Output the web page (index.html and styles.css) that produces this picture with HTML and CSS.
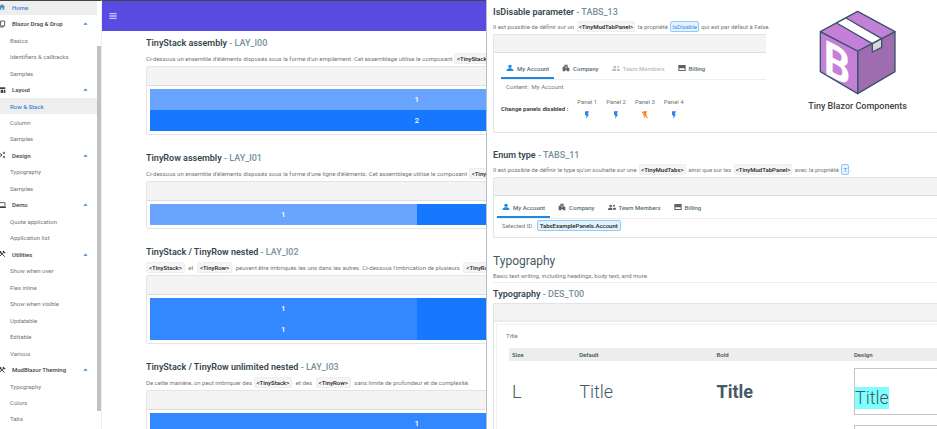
FILE: index.html
```html
<!DOCTYPE html>
<html lang="fr">
<head>
  <meta charset="UTF-8">
  <meta name="viewport" content="width=device-width, initial-scale=1.0">
  <title>Tiny Blazor Components</title>
  <link rel="stylesheet" href="styles.css">
</head>
<body>

  <!-- Icons -->
  <svg class="sprite" aria-hidden="true">
    <symbol id="i-home" viewBox="0 0 24 24"><path d="M10 20v-6h4v6h5v-8h3L12 3 2 12h3v8z"/></symbol>
    <symbol id="i-drag" viewBox="0 0 24 24"><path d="M8 3h12v15H8zM8 7H4v14h12v-3" fill="none" stroke="currentColor" stroke-width="2.5"/></symbol>
    <symbol id="i-layout" viewBox="0 0 24 24"><path d="M2 4h20v5H2zM2 11h5v10H2zM9 11h6v10H9zM17 11h5v10h-5z"/></symbol>
    <symbol id="i-design" viewBox="0 0 24 24"><path d="M3 5l9 7-9 7" fill="none" stroke="currentColor" stroke-width="3"/><path d="M18 1l1.500 3.500L23 6l-3.500 1.500L18 11l-1.500-3.500L13 6l3.500-1.500zM18 13l1.500 3.500L23 18l-3.500 1.500L18 23l-1.500-3.500L13 18l3.500-1.500z"/></symbol>
    <symbol id="i-demo" viewBox="0 0 24 24"><path d="M3 5h18v12H3z" fill="none" stroke="currentColor" stroke-width="2.500"/><path d="M0 18h24v3H0z"/></symbol>
    <symbol id="i-tools" viewBox="0 0 24 24"><path d="M4 20L19 5M7 6l13 14" fill="none" stroke="currentColor" stroke-width="3"/><path d="M2 3h7l2 4-4 4-5-4zM15 2h3v4h4v4h-5l-3-3z"/></symbol>
    <symbol id="i-up" viewBox="0 0 24 24"><path d="M2 18L12 7l10 11z"/></symbol>
    <symbol id="i-menu" viewBox="0 0 24 24"><path d="M1 3h22v4H1zM1 10h22v4H1zM1 17h22v4H1z"/></symbol>
    <symbol id="i-person" viewBox="0 0 24 24"><circle cx="12" cy="7" r="5"/><path d="M2 21v-3c0-3 6-5 10-5s10 2 10 5v3z"/></symbol>
    <symbol id="i-company" viewBox="0 0 24 24"><path fill-rule="evenodd" d="M2 8h5V2h10v9h5v11h-8v-4h-4v4H2zM11 5v9h2V5z"/></symbol>
    <symbol id="i-team" viewBox="0 0 24 24"><circle cx="8" cy="9" r="4"/><circle cx="18" cy="8" r="3"/><path d="M0 21v-3c0-3 5-4 8-4 1 0 3 0 4 1v6zM14 20v-4c2-2 10-3 10 1v3z"/></symbol>
    <symbol id="i-card" viewBox="0 0 24 24"><path fill-rule="evenodd" d="M1 3h22v18H1zM4 13v5h16v-5z"/></symbol>
    <symbol id="i-flash" viewBox="0 0 24 24"><path d="M6 1v12h4v10l8-13h-4l4-9z"/></symbol>
    <symbol id="i-flash-off" viewBox="0 0 24 24"><path d="M7 1h11l-4 9h4l-2 4-9-9zM7 9l7 7-4 7v-9H7z"/><path d="M2 2l19 20" fill="none" stroke="currentColor" stroke-width="3"/></symbol>
  </svg>

  <aside class="sidebar">
    <nav class="menu">
      <a class="menu-home active" href="#"><svg class="icon"><use href="#i-home"/></svg>Home</a>
      <button class="menu-group"><svg class="icon"><use href="#i-drag"/></svg>Blazor Drag &amp; Drop<svg class="caret"><use href="#i-up"/></svg></button>
      <a class="menu-item" href="#">Basics</a>
      <a class="menu-item" href="#">Identifiers &amp; callbacks</a>
      <a class="menu-item" href="#">Samples</a>
      <button class="menu-group"><svg class="icon"><use href="#i-layout"/></svg>Layout<svg class="caret"><use href="#i-up"/></svg></button>
      <a class="menu-item active" href="#">Row &amp; Stack</a>
      <a class="menu-item" href="#">Column</a>
      <a class="menu-item" href="#">Samples</a>
      <button class="menu-group"><svg class="icon"><use href="#i-design"/></svg>Design<svg class="caret"><use href="#i-up"/></svg></button>
      <a class="menu-item" href="#">Typography</a>
      <a class="menu-item" href="#">Samples</a>
      <button class="menu-group"><svg class="icon"><use href="#i-demo"/></svg>Demo<svg class="caret"><use href="#i-up"/></svg></button>
      <a class="menu-item" href="#">Quote application</a>
      <a class="menu-item" href="#">Application list</a>
      <button class="menu-group"><svg class="icon"><use href="#i-tools"/></svg>Utilities<svg class="caret"><use href="#i-up"/></svg></button>
      <a class="menu-item" href="#">Show when over</a>
      <a class="menu-item" href="#">Flex inline</a>
      <a class="menu-item" href="#">Show when visible</a>
      <a class="menu-item" href="#">Updatable</a>
      <a class="menu-item" href="#">Editable</a>
      <a class="menu-item" href="#">Various</a>
      <button class="menu-group"><svg class="icon"><use href="#i-tools"/></svg>MudBlazor Theming<svg class="caret"><use href="#i-up"/></svg></button>
      <a class="menu-item" href="#">Typography</a>
      <a class="menu-item" href="#">Colors</a>
      <a class="menu-item" href="#">Tabs</a>
    </nav>
    <div class="scrollbar"><div class="scroll-thumb"></div></div>
  </aside>

  <main class="layout-pane">
    <header class="app-bar">
      <button class="menu-btn" aria-label="Menu"><svg class="icon"><use href="#i-menu"/></svg></button>
    </header>
    <div class="page">
      <section class="example">
        <h2>TinyStack assembly <span>- LAY_I00</span></h2>
        <p class="desc">Ci-dessous un ensemble d'éléments disposés sous la forme d'un empilement. Cet assemblage utilise le composant <code>&lt;TinyStack&gt;</code></p>
        <div class="card">
          <div class="card-head"></div>
          <div class="demo">
            <div class="cell light">1</div>
            <div class="cell strong">2</div>
          </div>
        </div>
      </section>
      <section class="example">
        <h2>TinyRow assembly <span>- LAY_I01</span></h2>
        <p class="desc">Ci-dessous un ensemble d'éléments disposés sous la forme d'une ligne d'éléments. Cet assemblage utilise le composant <code>&lt;TinyRow&gt;</code></p>
        <div class="card">
          <div class="card-head"></div>
          <div class="demo row">
            <div class="cell light">1</div>
            <div class="cell strong"></div>
          </div>
        </div>
      </section>
      <section class="example">
        <h2>TinyStack / TinyRow nested <span>- LAY_I02</span></h2>
        <p class="desc"><code>&lt;TinyStack&gt;</code> et <code>&lt;TinyRow&gt;</code> peuvent être imbriqués les uns dans les autres. Ci-dessous l'imbrication de plusieurs <code>&lt;TinyRow&gt;</code></p>
        <div class="card">
          <div class="card-head"></div>
          <div class="demo row">
            <div class="stack">
              <div class="cell medium">1</div>
              <div class="cell medium">1</div>
            </div>
            <div class="stack strong"></div>
          </div>
        </div>
      </section>
      <section class="example">
        <h2>TinyStack / TinyRow unlimited nested <span>- LAY_I03</span></h2>
        <p class="desc">De cette manière, on peut imbriquer des <code>&lt;TinyStack&gt;</code> et des <code>&lt;TinyRow&gt;</code> sans limite de profondeur et de complexité.</p>
        <div class="card">
          <div class="card-head"></div>
          <div class="demo">
            <div class="cell medium">1</div>
          </div>
        </div>
      </section>
    </div>
  </main>

  <div class="tabs-pane">
    <section class="block">
      <h2>IsDisable parameter <span>- TABS_13</span></h2>
      <p class="desc">Il est possible de définir sur un <code>&lt;TinyMudTabPanel&gt;</code> la propriété <code class="prop">IsDisable</code> qui est par défaut à False.</p>
      <div class="card">
        <div class="card-head"></div>
        <div class="card-body roomy">
          <div class="tabs">
            <button class="tab selected"><svg class="icon"><use href="#i-person"/></svg>My Account</button>
            <button class="tab"><svg class="icon"><use href="#i-company"/></svg>Company</button>
            <button class="tab" disabled><svg class="icon"><use href="#i-team"/></svg>Team Members</button>
            <button class="tab"><svg class="icon"><use href="#i-card"/></svg>Billing</button>
          </div>
          <p class="tab-content">Content : My Account</p>
          <div class="switches">
            <strong>Change panels disabled :</strong>
            <div class="switch"><span id="p1">Panel 1</span><button aria-labelledby="p1"><svg class="icon"><use href="#i-flash"/></svg></button></div>
            <div class="switch"><span id="p2">Panel 2</span><button aria-labelledby="p2"><svg class="icon"><use href="#i-flash"/></svg></button></div>
            <div class="switch off"><span id="p3">Panel 3</span><button aria-labelledby="p3"><svg class="icon"><use href="#i-flash-off"/></svg></button></div>
            <div class="switch"><span id="p4">Panel 4</span><button aria-labelledby="p4"><svg class="icon"><use href="#i-flash"/></svg></button></div>
          </div>
        </div>
      </div>
    </section>

    <section class="block">
      <h2>Enum type <span>- TABS_11</span></h2>
      <p class="desc">Il est possible de définir le type qu'on souhaite sur une <code>&lt;TinyMudTabs&gt;</code> ainsi que sur les <code>&lt;TinyMudTabPanel&gt;</code> avec la propriété <code class="prop">T</code>.</p>
      <div class="card">
        <div class="card-head"></div>
        <div class="card-body">
          <div class="tabs">
            <button class="tab selected"><svg class="icon"><use href="#i-person"/></svg>My Account</button>
            <button class="tab"><svg class="icon"><use href="#i-company"/></svg>Company</button>
            <button class="tab"><svg class="icon"><use href="#i-team"/></svg>Team Members</button>
            <button class="tab"><svg class="icon"><use href="#i-card"/></svg>Billing</button>
          </div>
          <p class="tab-content">Selected ID : <code class="value">TabsExamplePanels.Account</code></p>
        </div>
      </div>
    </section>

    <section class="typo">
      <h1>Typography</h1>
      <p class="typo-intro">Basic text writing, including headings, body text, and more.</p>
      <h2>Typography <span>- DES_T00</span></h2>
      <div class="card">
        <div class="card-head thick"></div>
        <div class="sheet">
          <p class="sheet-title">Title</p>
          <table class="typo-table">
            <thead>
              <tr><th>Size</th><th>Default</th><th>Bold</th><th>Design</th></tr>
            </thead>
            <tbody>
              <tr>
                <td>L</td>
                <td>Title</td>
                <td><b>Title</b></td>
                <td><div class="frame"><mark>Title</mark></div></td>
              </tr>
              <tr>
                <td></td>
                <td></td>
                <td></td>
                <td><div class="frame"></div></td>
              </tr>
            </tbody>
          </table>
        </div>
      </div>
    </section>

    <!-- Logo, floats over the first example -->
    <div class="logo">
      <svg class="logo-box" viewBox="102 30 234 255" role="img" aria-label="Tiny Blazor Components">
        <path class="face-side" d="M218 153L330 95V215L218 281z"/>
        <path class="face-front" d="M106 95L218 153V281L106 215z"/>
        <path class="face-top" d="M106 95L218 34L330 95L218 153z"/>
        <path class="tape" d="M155 69L183 54L290 116L262 131z"/>
        <path class="tape-end" d="M262 131L290 116V142L262 156z"/>
        <text class="logo-letter" transform="matrix(.866 .45 0 1 116 219)">B</text>
      </svg>
      <div class="logo-name">Tiny Blazor Components</div>
    </div>
  </div>

</body>
</html>
```
FILE: styles.css
```css
* {
  box-sizing: border-box;
}

body {
  margin: 0;
  height: 100vh;
  display: grid;
  grid-template-columns: 102px 46fr 54fr;
  overflow: hidden;
  font-family: Roboto, "Liberation Sans", sans-serif;
  font-size: 6px;
  color: #757575;
  background-color: #fff;
}

h1, h2, p {
  margin: 0;
}

button {
  padding: 0;
  border: none;
  background: none;
  font: inherit;
  color: inherit;
  cursor: pointer;
}

a {
  color: inherit;
  text-decoration: none;
}

.sprite {
  display: none;
}

.icon {
  width: 8px;
  height: 8px;
  flex: none;
  fill: currentColor;
}

/* Sidebar */
.sidebar {
  display: flex;
  height: 100vh;
  overflow: hidden;
  border-top: 1px solid #444;
  border-right: 1px solid #eee;
}

/* slightly scrolled */
.menu {
  flex: 1;
  display: flex;
  flex-direction: column;
  margin: -2px 0 2px;
}

.menu-home,
.menu-group,
.menu-item {
  flex: 1;
  display: flex;
  align-items: center;
  white-space: nowrap;
}

.menu-home,
.menu-group {
  gap: 6px;
  font-weight: 500;
  color: #424242;
}

.menu-home .icon,
.menu-group .icon {
  margin-left: -2px;
}

.menu-item {
  padding-left: 10px;
}

.menu-home.active,
.menu-item.active {
  background-color: #eee;
  color: #3f7fe0;
  font-weight: 500;
}

.menu-home .icon {
  color: #4a90c4;
}

.caret {
  width: 5px;
  height: 5px;
  margin-left: auto;
  margin-right: 9px;
  fill: #2f80ed;
}

.scrollbar {
  width: 4px;
  padding: 45px 0 18px;
  display: flex;
}

.scroll-thumb {
  flex: 1;
  background-color: #c1c1c1;
}

/* Left pane */
.layout-pane {
  height: 100vh;
  overflow: hidden;
  border-top: 1px solid #444;
}

.app-bar {
  display: flex;
  align-items: center;
  height: 30px;
  padding-left: 7px;
  background-color: #594ae2;
}

.menu-btn {
  display: flex;
  color: #c5bfff;
}

/* wider than the pane, the right side is cut */
.page {
  width: 141%;
  margin-left: 44px;
  padding-top: 4px;
}

.example {
  margin-bottom: 15px;
}

h2 {
  font-size: 9px;
  line-height: 16px;
  font-weight: 600;
  color: #37474f;
  white-space: nowrap;
}

h2 span {
  font-weight: 500;
  color: #78909c;
}

.desc {
  line-height: 15px;
  white-space: nowrap;
}

code {
  margin: 0 2px;
  padding: 1px 2px;
  border: 1px solid #eee;
  border-radius: 2px;
  background-color: #f5f5f5;
  font-family: inherit;
  font-size: 6px;
  font-weight: 500;
  color: #222;
}

.desc code:first-child {
  margin-left: 0;
}

.prop {
  border-color: #90caf9;
  background-color: #e3f2fd;
  color: #448aff;
  font-weight: 400;
}

.card {
  border: 1px solid #e4e4e4;
  border-radius: 2px;
}

.card-head {
  height: 19px;
  background-color: #f4f4f4;
  border-bottom: 1px solid #ddd;
}

.demo {
  margin: 3px;
}

.row {
  display: flex;
}

.row > div {
  flex: 1;
}

.cell {
  height: 21px;
  line-height: 21px;
  text-align: center;
  font-size: 8px;
  font-weight: 500;
  color: #fff;
}

.light {
  background-color: #69a5ff;
}

.medium {
  background-color: #3388ff;
}

.strong {
  background-color: #1677ff;
}

/* Right pane */
.tabs-pane {
  position: relative;
  height: 100vh;
  overflow: hidden;
  border-left: 1px solid #b0bec5;
  padding: 4px 0 0 6px;
}

/* stays readable above the logo */
.tabs-pane .desc {
  position: relative;
  z-index: 1;
  line-height: 14px;
}

.tabs-pane .desc code {
  margin: 0 1px;
  padding: 1px;
}

.tabs-pane .card {
  border-right: none;
  border-radius: 2px 0 0 2px;
}

.tabs-pane .card-head {
  height: 18px;
}

.block {
  margin-bottom: 14px;
}

.card-body {
  padding: 2px 0 4px 3px;
}

.card-body.roomy {
  padding: 6px 0 13px 7px;
}

.tabs {
  display: flex;
  gap: 3px;
  border-bottom: 1px solid #eee;
}

.tab {
  display: flex;
  align-items: center;
  gap: 3px;
  height: 20px;
  padding: 0 5px;
  border-bottom: 2px solid transparent;
  font-weight: 500;
  color: #546e7a;
}

.tab .icon {
  color: #616161;
}

.tab.selected {
  border-bottom-color: #1e88e5;
}

.tab.selected .icon {
  color: #1e88e5;
}

.tab:disabled,
.tab:disabled .icon {
  color: #bdbdbd;
}

.tab-content {
  padding-left: 5px;
  line-height: 14px;
}

.value {
  margin: 0;
  border-color: #90caf9;
  background-color: #e3f2fd;
}

.switches {
  display: flex;
  align-items: center;
  gap: 9px;
  margin-top: 3px;
}

.switches strong {
  font-weight: 600;
  color: #333;
}

.switch {
  display: flex;
  flex-direction: column;
  align-items: center;
  gap: 4px;
  line-height: 10px;
}

.switch button {
  display: flex;
  color: #2f80ed;
}

.switch.off button {
  color: #f57c00;
}

/* Typography */
.typo h1 {
  font-size: 12px;
  line-height: 18px;
  font-weight: 400;
  color: #455a64;
}

.typo-intro {
  margin-bottom: 3px;
  line-height: 12px;
  border-bottom: 1px solid #eee;
}

.typo .card {
  margin-top: 1px;
}

.tabs-pane .card-head.thick {
  border-bottom: 2px solid #ececec;
}

.sheet {
  margin: 2px 0 0 2px;
  padding: 4px 0 0 12px;
  border: 1px solid #f0f0f0;
  border-right: none;
}

.sheet-title {
  margin-left: -3px;
  line-height: 14px;
}

.typo-table {
  width: 112%;
  margin-top: 5px;
  table-layout: fixed;
  border-collapse: collapse;
  color: #455a64;
}

.typo-table th {
  height: 13px;
  padding: 0 3px;
  background-color: #ededed;
  text-align: left;
  font-weight: 600;
}

.typo-table th:first-child {
  width: 14%;
}

.typo-table td {
  padding: 7px 3px 3px;
  font-size: 18px;
  font-weight: 300;
}

.typo-table td b {
  font-weight: 700;
}

.frame {
  height: 47px;
  padding-top: 18px;
  border: 1px solid #c4c4c4;
}

.frame mark {
  display: inline-block;
  line-height: 22px;
  background-color: #80ffff;
  color: inherit;
}

/* Logo */
.logo {
  position: absolute;
  top: 1px;
  right: 0;
  width: 38%;
  height: 128px;
  padding: 9px 0 0 12px;
  display: flex;
  flex-direction: column;
  align-items: center;
  background-color: #fff;
}

.logo-box {
  width: 78px;
  height: 85px;
}

.logo-box path {
  stroke: #37566b;
  stroke-width: 4;
  stroke-linejoin: round;
}

.face-side {
  fill: #a06cb0;
}

.face-front,
.face-top {
  fill: #c47fd8;
}

.tape {
  fill: #fff;
}

.tape-end {
  fill: #d6d6d6;
}

.logo-letter {
  fill: #fff;
  font-size: 144px;
  font-weight: 700;
}

.logo-name {
  margin-top: 4px;
  font-size: 9px;
  line-height: 14px;
  font-weight: 500;
  color: #424242;
}
```
